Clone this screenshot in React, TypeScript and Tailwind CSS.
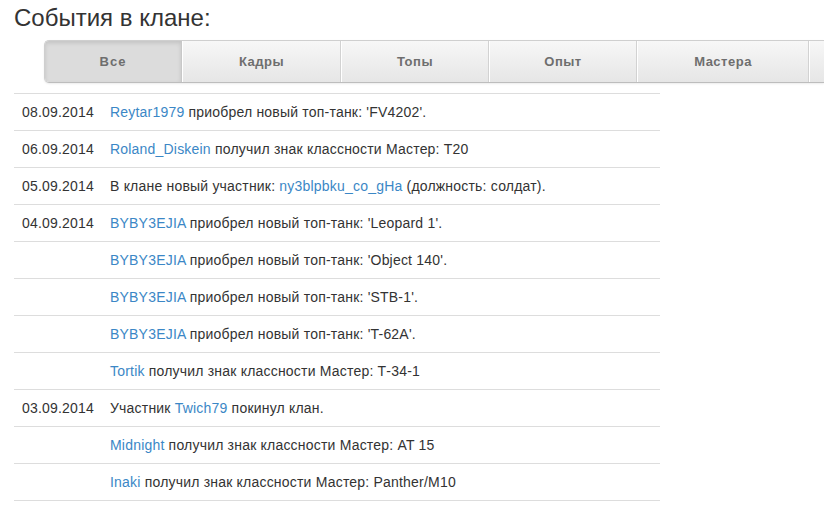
const tabs = [
  { label: "Все", w: "w-[137px]", active: true },
  { label: "Кадры", w: "w-[159px]" },
  { label: "Топы", w: "w-[148px]" },
  { label: "Опыт", w: "w-[148px]" },
  { label: "Мастера", w: "w-[172px]" },
  { label: "", w: "w-[60px]" },
];

type Row = { date?: string; parts: (string | { link: string })[] };

const rows: Row[] = [
  { date: "08.09.2014", parts: [{ link: "Reytar1979" }, " приобрел новый топ-танк: 'FV4202'."] },
  { date: "06.09.2014", parts: [{ link: "Roland_Diskein" }, " получил знак классности Мастер: T20"] },
  {
    date: "05.09.2014",
    parts: ["В клане новый участник: ", { link: "ny3blpbku_co_gHa" }, " (должность: солдат)."],
  },
  { date: "04.09.2014", parts: [{ link: "BYBY3EJIA" }, " приобрел новый топ-танк: 'Leopard 1'."] },
  { parts: [{ link: "BYBY3EJIA" }, " приобрел новый топ-танк: 'Object 140'."] },
  { parts: [{ link: "BYBY3EJIA" }, " приобрел новый топ-танк: 'STB-1'."] },
  { parts: [{ link: "BYBY3EJIA" }, " приобрел новый топ-танк: 'T-62A'."] },
  { parts: [{ link: "Tortik" }, " получил знак классности Мастер: Т-34-1"] },
  { date: "03.09.2014", parts: ["Участник ", { link: "Twich79" }, " покинул клан."] },
  { parts: [{ link: "Midnight" }, " получил знак классности Мастер: AT 15"] },
  { parts: [{ link: "Inaki" }, " получил знак классности Мастер: Panther/M10"] },
];

const App = () => {
  return (
    <div className="w-[824px] h-[506px] overflow-hidden bg-white font-['Liberation_Sans',Arial,sans-serif] text-[#333]">
      <h1 className="pl-[14px] pt-[3px] text-[24px] leading-[29px] text-[#333]">
        События в клане:
      </h1>
      <div className="ml-[44px] mt-[8px] flex h-[43px] rounded-l-[5px] border border-r-0 border-[#cfcfcf] border-b-[#bdbdbd] overflow-hidden shadow-[0_1px_2px_rgba(0,0,0,0.08)]">
        {tabs.map((t, i) => (
          <div
            key={i}
            className={
              t.active
                ? `${t.w} shrink-0 flex items-center justify-center bg-[#dcdcdc] shadow-[inset_0_2px_4px_rgba(0,0,0,0.12)] border-r border-[#c8c8c8] text-[13px] font-bold tracking-[1px] text-[#6e6e6e]`
                : `${t.w} shrink-0 flex items-center justify-center bg-gradient-to-b from-[#f7f7f7] to-[#e6e6e6] border-l border-white border-r border-r-[#d2d2d2] text-[13px] font-bold tracking-[0.5px] text-[#6e6e6e]`
            }
          >
            {t.label}
          </div>
        ))}
      </div>
      <div className="ml-[14px] mt-[10px] w-[646px] border-t border-[#dddddd]">
        {rows.map((r, i) => (
          <div
            key={i}
            className="flex h-[37px] items-center border-b border-[#dddddd] text-[14px] tracking-[0.2px]"
          >
            <div className="w-[88px] shrink-0 pl-[8px]">{r.date ?? ""}</div>
            <div className="pl-[8px]">
              {r.parts.map((p, j) =>
                typeof p === "string" ? (
                  <span key={j}>{p}</span>
                ) : (
                  <a key={j} className="text-[#3b87c6]">
                    {p.link}
                  </a>
                )
              )}
            </div>
          </div>
        ))}
      </div>
    </div>
  );
};

export default App;
